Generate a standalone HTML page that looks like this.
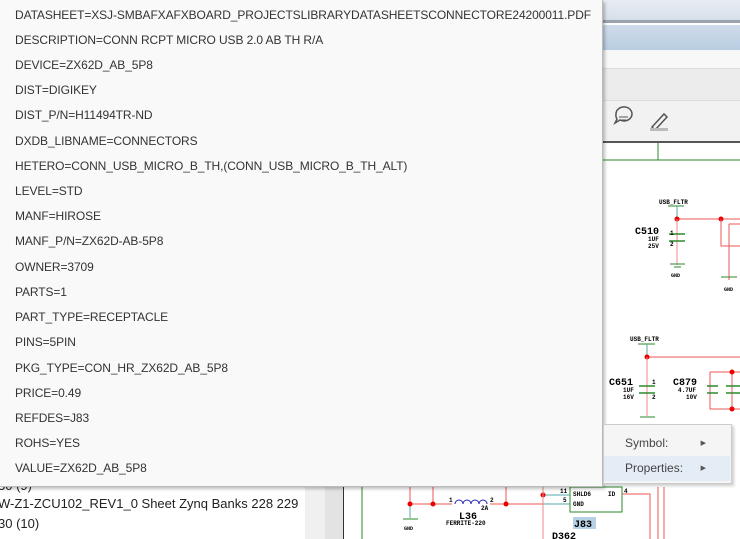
<!DOCTYPE html>
<html><head><meta charset="utf-8"><style>
body{margin:0;width:740px;height:539px;overflow:hidden;position:relative;background:#fff;font-family:"Liberation Sans",sans-serif}
.pop{position:absolute;left:0;top:0;width:602px;height:486px;background:#f9f9f9;border-right:1px solid #bbb;border-bottom:1px solid #bbb;box-shadow:2px 2px 3px rgba(0,0,0,.25);z-index:5}
.pop div{position:absolute;left:15px;font-size:12px;color:#333;white-space:nowrap;letter-spacing:-0.1px}
.menu{position:absolute;left:603px;top:424px;width:127px;height:58px;background:#f5f5f5;border:1px solid #ccc;box-shadow:2px 2px 3px rgba(0,0,0,.2);z-index:6;font-size:12px;color:#444}
.menu .it{position:absolute;left:0;width:126px;height:25px;line-height:25px;padding-left:21px;box-sizing:border-box}
.menu .ar{position:absolute;right:24px;font-size:7px;color:#555}
.bl{position:absolute;font-size:13px;color:#222;white-space:nowrap}
</style></head><body>
<!-- right header bars -->
<div style="position:absolute;left:603px;top:0;width:137px;height:20px;background:linear-gradient(#e8edf3,#d6dfe9)"></div>
<div style="position:absolute;left:603px;top:20px;width:137px;height:3px;background:#9aa3ad"></div>
<div style="position:absolute;left:603px;top:25px;width:137px;height:25px;background:linear-gradient(#cfdcea,#b9cde2)"></div>
<div style="position:absolute;left:603px;top:50px;width:137px;height:18px;background:#f8f8f8"></div>
<div style="position:absolute;left:603px;top:68px;width:137px;height:32px;background:#ececec;border-top:1px solid #ddd"></div>
<div style="position:absolute;left:603px;top:100px;width:137px;height:41px;background:#f2f2f2;border-top:1px solid #ddd"></div>
<div style="position:absolute;left:603px;top:141px;width:137px;height:2px;background:#555"></div>
<!-- bottom left -->
<div style="position:absolute;left:305px;top:487px;width:20px;height:52px;background:#f0f0f0"></div>
<div style="position:absolute;left:325px;top:487px;width:18px;height:52px;background:#e3e3e3"></div>
<div style="position:absolute;left:343px;top:487px;width:1px;height:52px;background:#333"></div>
<div class="bl" style="left:-2px;top:496px">W-Z1-ZCU102_REV1_0 Sheet Zynq Banks 228 229</div>
<div class="bl" style="left:-2px;top:516px">30 (10)</div>
<div class="bl" style="left:-2px;top:478px">30 (9)</div>
<svg style="position:absolute;left:0;top:0" width="740" height="539" font-family="Liberation Mono,monospace" font-weight="bold">
<!-- toolbar icons -->
<path d="M616 114 a8 7 0 1 1 4 6 l-5 3 2-4 a7 7 0 0 1-1-5z" fill="none" stroke="#555" stroke-width="1.5"/>
<line x1="619" y1="117" x2="628" y2="117" stroke="#555"/><line x1="619" y1="120" x2="626" y2="120" stroke="#555"/>
<path d="M652 127 l12-13 3 3-12 13z" fill="none" stroke="#555" stroke-width="1.5"/>
<rect x="650" y="128" width="18" height="3" fill="#bbb"/>
<!-- green top lines -->
<line x1="603" y1="160" x2="740" y2="160" stroke="#2a8a2a"/>
<line x1="658" y1="143" x2="658" y2="160" stroke="#2a8a2a"/>
<!-- C510 -->
<text x="659" y="204" font-size="6">USB_FLTR</text>
<line x1="668" y1="206" x2="684" y2="206" stroke="#2a8a2a"/>
<line x1="677" y1="206" x2="677" y2="219" stroke="#5aa"/>
<line x1="677" y1="219" x2="740" y2="219" stroke="#e55"/>
<circle cx="677" cy="219" r="2.5" fill="#e00"/><circle cx="721" cy="219" r="2.5" fill="#e00"/>
<path d="M721 219 V246 H740 M729 224 H740 M729 224 V280" stroke="#e55" fill="none"/>
<line x1="677" y1="219" x2="677" y2="265" stroke="#e88"/>
<line x1="669" y1="234" x2="685" y2="234" stroke="#2a8a2a" stroke-width="1.5"/>
<line x1="669" y1="241" x2="685" y2="241" stroke="#2a8a2a" stroke-width="1.5"/>
<text x="635" y="234" font-size="10">C510</text>
<text x="648" y="241" font-size="6">1UF</text><text x="648" y="248" font-size="6">25V</text>
<text x="670" y="235" font-size="6">1</text><text x="670" y="246" font-size="6">2</text>
<line x1="670" y1="264" x2="685" y2="264" stroke="#2a8a2a"/><line x1="674" y1="267" x2="681" y2="267" stroke="#2a8a2a"/>
<text x="671" y="277" font-size="5">GND</text>
<line x1="721" y1="277" x2="737" y2="277" stroke="#2a8a2a"/><text x="724" y="291" font-size="5">GND</text>
<!-- C651 / C879 -->
<text x="630" y="341" font-size="6">USB_FLTR</text>
<line x1="638" y1="344" x2="655" y2="344" stroke="#2a8a2a"/>
<line x1="647" y1="344" x2="647" y2="357" stroke="#5aa"/>
<line x1="647" y1="357" x2="740" y2="357" stroke="#e55"/>
<circle cx="647" cy="357" r="2.5" fill="#e00"/>
<line x1="647" y1="357" x2="647" y2="416" stroke="#e88"/>
<line x1="639" y1="386" x2="655" y2="386" stroke="#2a8a2a" stroke-width="1.5"/>
<line x1="639" y1="393" x2="655" y2="393" stroke="#2a8a2a" stroke-width="1.5"/>
<text x="609" y="385" font-size="10">C651</text>
<text x="623" y="392" font-size="6">1UF</text><text x="623" y="399" font-size="6">16V</text>
<text x="652" y="384" font-size="6">1</text><text x="652" y="399" font-size="6">2</text>
<line x1="640" y1="417" x2="655" y2="417" stroke="#2a8a2a"/>
<text x="673" y="385" font-size="10">C879</text>
<text x="678" y="392" font-size="6">4.7UF</text><text x="686" y="399" font-size="6">10V</text>
<path d="M710 372 H740 M710 372 V409 H740 M732 372 V409" stroke="#e55" fill="none"/>
<circle cx="732" cy="372" r="2.5" fill="#e00"/><circle cx="732" cy="409" r="2.5" fill="#e00"/>
<line x1="707" y1="386" x2="718" y2="386" stroke="#2a8a2a" stroke-width="1.5"/><line x1="707" y1="393" x2="718" y2="393" stroke="#2a8a2a" stroke-width="1.5"/>
<line x1="726" y1="386" x2="740" y2="386" stroke="#2a8a2a" stroke-width="1.5"/><line x1="726" y1="393" x2="740" y2="393" stroke="#2a8a2a" stroke-width="1.5"/>
<!-- bottom schematic -->
<line x1="362" y1="487" x2="362" y2="539" stroke="#2a8a2a"/>
<path d="M410 487 V504 M433 487 V504 M506 487 V504 M410 504 H452 M490 504 H560" stroke="#e55" fill="none"/>
<path d="M410 504 V518" stroke="#5aa"/>
<line x1="403" y1="519" x2="418" y2="519" stroke="#2a8a2a"/><text x="404" y="530" font-size="5">GND</text>
<circle cx="410" cy="504" r="2.5" fill="#e00"/><circle cx="433" cy="504" r="2.5" fill="#e00"/><circle cx="506" cy="504" r="2.5" fill="#e00"/>
<path d="M455 504 a4 4 0 0 1 8 0 a4 4 0 0 1 8 0 a4 4 0 0 1 8 0 a4 4 0 0 1 8 0" stroke="#22b" fill="none"/>
<text x="449" y="502" font-size="6">1</text><text x="490" y="502" font-size="6">2</text><text x="481" y="510" font-size="6">2A</text>
<text x="459" y="519" font-size="10">L36</text><text x="446" y="525" font-size="6">FERRITE-220</text>
<path d="M543 495 H570 M543 504 H570" stroke="#5aa"/>
<circle cx="543" cy="495" r="2.5" fill="#e00"/><line x1="543" y1="487" x2="543" y2="539" stroke="#e88"/>
<rect x="570" y="487" width="52" height="25" fill="none" stroke="#2a8a2a"/>
<text x="573" y="496" font-size="6">SHLD6</text><text x="573" y="506" font-size="6">GND</text><text x="608" y="496" font-size="6">ID</text>
<text x="560" y="493" font-size="6">11</text><text x="563" y="502" font-size="6">5</text><text x="624" y="493" font-size="6">4</text>
<path d="M622 494 H650 V539 M658 487 V539 M664 487 V539" stroke="#e55" fill="none"/>
<rect x="573" y="517" width="23" height="12" fill="#b6d0e6"/><text x="574" y="527" font-size="10">J83</text>
<text x="552" y="539" font-size="10">D362</text>
</svg>
<div class="pop">
<div style="top:8px">DATASHEET=XSJ-SMBAFXAFXBOARD_PROJECTSLIBRARYDATASHEETSCONNECTORE24200011.PDF</div>
<div style="top:33px">DESCRIPTION=CONN RCPT MICRO USB 2.0 AB TH R/A</div>
<div style="top:58px">DEVICE=ZX62D_AB_5P8</div>
<div style="top:83px">DIST=DIGIKEY</div>
<div style="top:108px">DIST_P/N=H11494TR-ND</div>
<div style="top:134px">DXDB_LIBNAME=CONNECTORS</div>
<div style="top:159px">HETERO=CONN_USB_MICRO_B_TH,(CONN_USB_MICRO_B_TH_ALT)</div>
<div style="top:184px">LEVEL=STD</div>
<div style="top:209px">MANF=HIROSE</div>
<div style="top:234px">MANF_P/N=ZX62D-AB-5P8</div>
<div style="top:260px">OWNER=3709</div>
<div style="top:285px">PARTS=1</div>
<div style="top:310px">PART_TYPE=RECEPTACLE</div>
<div style="top:335px">PINS=5PIN</div>
<div style="top:361px">PKG_TYPE=CON_HR_ZX62D_AB_5P8</div>
<div style="top:386px">PRICE=0.49</div>
<div style="top:411px">REFDES=J83</div>
<div style="top:436px">ROHS=YES</div>
<div style="top:461px">VALUE=ZX62D_AB_5P8</div>
</div>
<div class="menu">
<div class="it" style="top:6px">Symbol:<span class="ar">▶</span></div>
<div class="it" style="top:31px;background:#e4ecf5">Properties:<span class="ar">▶</span></div>
</div>
</body></html>
